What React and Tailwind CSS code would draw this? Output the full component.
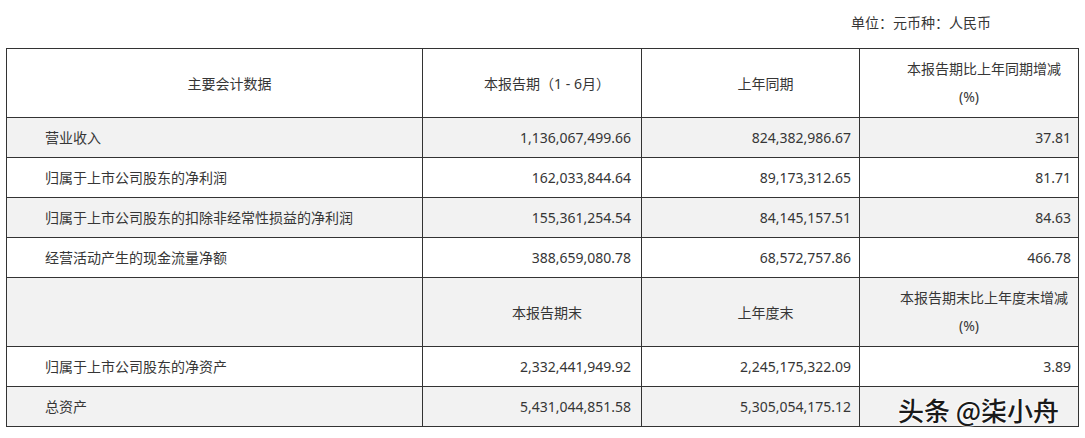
import React from "react";

const rows1 = [
  ["营业收入", "1,136,067,499.66", "824,382,986.67", "37.81", true],
  ["归属于上市公司股东的净利润", "162,033,844.64", "89,173,312.65", "81.71", false],
  ["归属于上市公司股东的扣除非经常性损益的净利润", "155,361,254.54", "84,145,157.51", "84.63", true],
  ["经营活动产生的现金流量净额", "388,659,080.78", "68,572,757.86", "466.78", false],
];

const rows2 = [
  ["归属于上市公司股东的净资产", "2,332,441,949.92", "2,245,175,322.09", "3.89", false],
  ["总资产", "5,431,044,851.58", "5,305,054,175.12", "", true],
];

function DataRow({ r }) {
  return (
    <tr className={`h-[40px] ${r[4] ? "bg-[#f2f2f2]" : "bg-white"}`}>
      <td className="border border-[#333] pl-[38px] text-left">{r[0]}</td>
      <td className="border border-[#333] pr-[10px] text-right">{r[1]}</td>
      <td className="border border-[#333] pr-[8px] text-right">{r[2]}</td>
      <td className="border border-[#333] pr-[7px] text-right">{r[3]}</td>
    </tr>
  );
}

function HeadCell({ text }) {
  return <td className="border border-[#333] text-center pl-[30px]">{text}</td>;
}

function PctCell({ text }) {
  return (
    <td className="border border-[#333] text-center leading-[28px]">
      <div className="pl-[30px] whitespace-nowrap">{text}</div>
      <div>(%)</div>
    </td>
  );
}

export default function App() {
  return (
    <div
      className="relative w-[1085px] h-[438px] bg-white text-[14px] text-[#363636]"
      style={{ fontFamily: '"Noto Sans", "Noto Sans CJK SC", sans-serif' }}
    >
      <div className="h-[48px] flex items-center justify-end pr-[94px] pb-[4px]">
        单位：元币种：人民币
      </div>
      <table className="ml-[6px] border-collapse table-fixed w-[1072px]">
        <colgroup>
          <col className="w-[416px]" />
          <col className="w-[219px]" />
          <col className="w-[218px]" />
          <col className="w-[219px]" />
        </colgroup>
        <tbody>
          <tr className="h-[69px] bg-white">
            <HeadCell text="主要会计数据" />
            <HeadCell text="本报告期（1 - 6月）" />
            <HeadCell text="上年同期" />
            <PctCell text="本报告期比上年同期增减" />
          </tr>
          {rows1.map((r, i) => (
            <DataRow key={i} r={r} />
          ))}
          <tr className="h-[69px] bg-[#f2f2f2]">
            <td className="border border-[#333]"></td>
            <HeadCell text="本报告期末" />
            <HeadCell text="上年度末" />
            <PctCell text="本报告期末比上年度末增减" />
          </tr>
          {rows2.map((r, i) => (
            <DataRow key={i} r={r} />
          ))}
        </tbody>
      </table>
      <div
        className="absolute left-[898px] top-[392px] text-[26px] leading-[36px] font-medium text-[#1a1a1a] [text-shadow:0_0_2px_#fff,0_0_2px_#fff,0_0_3px_#fff]"
        style={{ fontFamily: '"Noto Sans CJK SC", sans-serif' }}
      >
        头条 @柒小舟
      </div>
    </div>
  );
}
